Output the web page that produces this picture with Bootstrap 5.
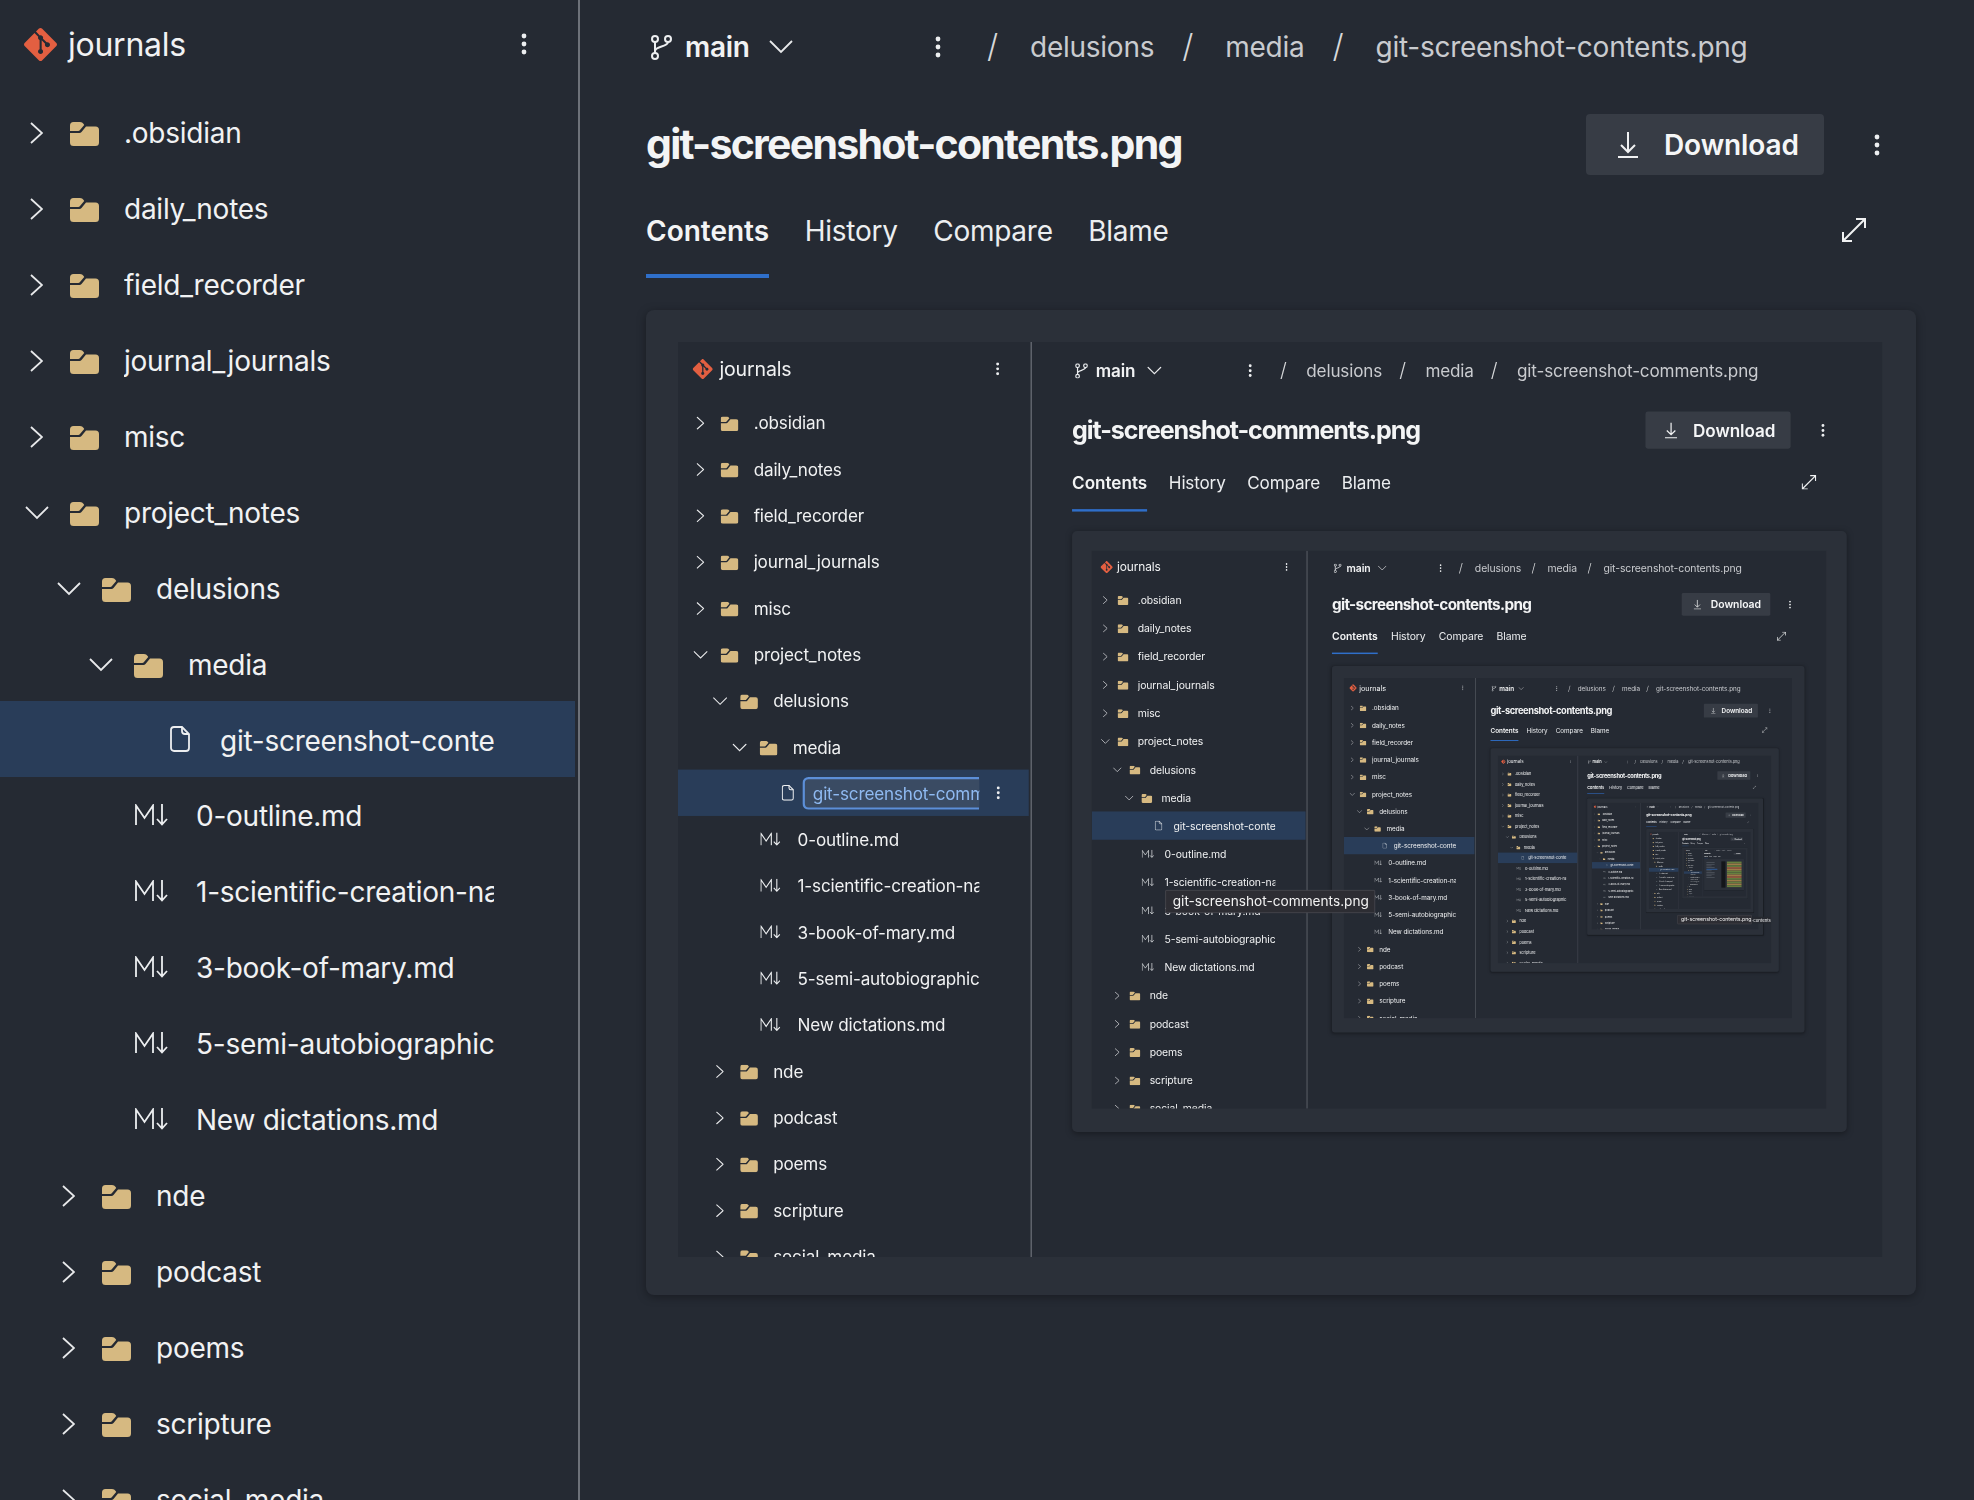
<!DOCTYPE html>
<html lang="en">
<head>
<meta charset="utf-8">
<title>journals</title>
<link href="https://cdn.jsdelivr.net/npm/bootstrap@5.3.0/dist/css/bootstrap.min.css" rel="stylesheet">
<style>
html,body{margin:0;height:100%;overflow:hidden;background:#252a33}
body{font-family:Inter,"Liberation Sans",sans-serif;color:#f1f2f3}
.frame{width:1974px;height:1500px;background:#252a33;overflow:hidden;position:relative;color:#f1f2f3;letter-spacing:-.25px}
.side{width:580px;height:1500px;border-right:2px solid #6d7179;flex:none;overflow:hidden}
.side-head{height:88px;margin-bottom:6px;padding:0 0 0 24px}
.repo{font-size:32px;line-height:44px;margin:2px 0 0 11px;font-weight:400}
.logo{width:33px;height:33px;fill:#e35f41;display:block}
.dots{width:6px;height:22px;display:block;fill:#eceef0;flex:none}
.side-dots{position:absolute;left:521px;top:33px}
.tree{background:transparent;border-radius:0;width:575px}
.tree .list-group-item{height:76px;border:0;border-radius:0;background:transparent;color:#f1f2f3;font-size:28px;line-height:40px;display:flex;align-items:center;padding:0 81px 0 0;white-space:nowrap;overflow:hidden;position:relative}
.tree .list-group-item.active{background:#293d59;color:#f1f2f3}
.tree .list-group-item.active .label{padding-top:3px}
.chev-slot{width:58px;padding-right:9px;flex:none;display:flex;justify-content:center;margin-top:1px}
.fold{width:29px;height:24px;fill:#d6b981;flex:none;margin:3px 25px 0 0;display:block}
.chev{display:block;fill:none;stroke:#e8e9eb;stroke-width:1.8}
.label{overflow:hidden;flex:1 1 auto;min-width:0;padding-top:1px}
.md-ic{width:33px;height:22px;flex:none;margin-right:28px;display:block;fill:none;stroke:#eceef0;stroke-width:1.8}
.file-ic{width:20px;height:26px;flex:none;margin-right:30px;display:block;fill:none;stroke:#eceef0;stroke-width:1.8}
.rename{position:relative;flex:1 1 auto;height:54px;margin:2px 0 0 -16px;padding-left:13px;border:4px solid #5c8fd8;border-right:0;border-radius:10px 0 0 10px;background:#3a4b63;color:#8fbaf2;line-height:46px;overflow:hidden}
.row-dots{position:absolute;left:522px;top:27px}
.main{flex:1 1 auto;min-width:0;padding:0 58px 0 66px}
.topbar{height:94px;font-size:28px}
.branch{width:21px;height:25px;fill:none;stroke:#eceef0;stroke-width:2;margin-left:5px;display:block}
.bname{font-weight:600;margin-left:13px;width:84px}
.top-dots{margin-left:142px}
.crumbs{margin:0 0 0 46px;padding:0;flex-wrap:nowrap;color:#c9cbcf;--bs-breadcrumb-divider:none}
.crumbs .breadcrumb-item,.crumbs .breadcrumb-item.active{color:#c9cbcf;padding:0}
.crumbs .breadcrumb-item+.breadcrumb-item{padding:0}
.crumbs .breadcrumb-item+.breadcrumb-item::before{content:none}
.slash{width:43px;display:inline-block;font-size:32px;font-weight:300;line-height:1;color:#d6d8da}
.gapr{margin-right:28px}
.titlerow{height:61px;margin-top:20px}
.ttl{font-size:41px;font-weight:700;letter-spacing:-1.75px;margin:0;color:#f3f4f5;line-height:61px}
.dl{width:238px;height:61px;background:#373c45;border:0;border-radius:4px;color:#f5f6f7;font-weight:600;font-size:28px;letter-spacing:-.1px;display:flex;align-items:center;padding:0 0 0 32px;margin-left:auto}
.dl:hover{background:#373c45;color:#f5f6f7}
.dl-ic{width:20px;height:26px;fill:none;stroke:#f0f1f2;stroke-width:2;display:block;margin-right:26px}
.more{margin:0 36px 0 50px}
.tabsrow{margin-top:38px;position:relative}
.tabs{gap:35.5px;border:0}
.tabs .nav-link{padding:0 0 25px;border:0;border-bottom:4px solid transparent;border-radius:0;background:transparent;font-size:28px;line-height:36px;color:#eceef0;white-space:nowrap}
.tabs .nav-link.active{border-bottom-color:#2f6fca;font-weight:600;color:#f3f4f5;background:transparent;letter-spacing:0;min-width:123px}
.expand{position:absolute;right:50px;top:5px;width:24px;height:24px;fill:none;stroke:#f0f1f2;stroke-width:2}
.shot-card{width:1270px;height:985px;margin-top:32px;padding:32px 32px 38px;background:#2b3039;border:0;border-radius:8px;box-shadow:0 2px 10px rgba(0,0,0,.35)}
.shot{width:1206px;height:915px;overflow:hidden;filter:blur(.5px)}
.shot>.frame{transform:scale(.61);transform-origin:0 0}
.tip{position:absolute;z-index:5;background:#2d2d33;border:2px solid #4b4b52;color:#f3f3f3;white-space:nowrap;overflow:hidden;border-radius:2px;display:flex;align-items:center;letter-spacing:0}
.tip-a{left:198px;top:912px;width:564px;height:62px;font-size:36.7px;padding-left:18px}
.tip-b{left:1469px;top:1045px;width:328px;height:40px;font-size:23px;padding-left:14px}
.tip-c{left:1610px;top:1165px;width:364px;height:48px;font-size:31px;padding-left:8px;background:#25282f;border:0}
.diff{display:flex;gap:40px;height:100%;padding:40px}
.diff-l{flex:1 1 auto}
.diff-l i{display:block;height:22px;margin:30px 0;background:#545a64;width:60%}
.diff-l i:nth-child(3n){width:38%}
.diff-l i:nth-child(5){background:#2f6fca;width:80%}
.diff-c{width:130px;background:#14161a}
.diff-r{width:480px;display:flex;flex-direction:column;gap:8px;background:#3c3f3a;padding:10px}
.diff-r i{display:block;height:50px}
.g{background:#66803f}.y{background:#9c7c48}.r{background:#a05c3f}
</style>
</head>
<body>
<div id="app"></div>
<script src="https://cdn.jsdelivr.net/npm/bootstrap@5.3.0/dist/js/bootstrap.bundle.min.js"></script>
<script>
var DOTS='<svg class="dots {c}" viewBox="0 0 6 22"><circle cx="3" cy="3" r="2.4"/><circle cx="3" cy="11" r="2.4"/><circle cx="3" cy="19" r="2.4"/></svg>';
function dots(c){return DOTS.replace('{c}',c||'');}
var LOGO='<svg class="logo" viewBox="0 0 24 24"><path d="M23.546 10.93L13.067.452c-.604-.603-1.582-.603-2.188 0L8.708 2.627l2.76 2.76c.645-.215 1.379-.07 1.889.441.516.515.658 1.258.438 1.9l2.658 2.66c.645-.223 1.387-.078 1.9.435.721.72.721 1.884 0 2.604-.719.719-1.881.719-2.6 0-.539-.541-.674-1.337-.404-1.996L12.86 8.955v6.525c.176.086.342.203.488.348.713.721.713 1.883 0 2.6-.719.721-1.889.721-2.609 0-.719-.719-.719-1.879 0-2.598.182-.18.387-.316.605-.406V8.835c-.217-.091-.424-.222-.6-.401-.545-.545-.676-1.342-.396-2.009L7.636 3.7.45 10.881c-.6.605-.6 1.584 0 2.189l10.48 10.477c.604.604 1.582.604 2.186 0l10.43-10.43c.605-.603.605-1.582 0-2.187"/></svg>';
var FOLD='<svg class="fold" viewBox="0 0 29 24"><path d="M0 9V3.5A3.5 3.5 0 0 1 3.500 0H10c1.600 0 2.800.7 3.600 2l.6 1-4.200 5c-.5.6-1 1-1.800 1z"/><path d="M0 11h9.500c.8 0 1.400-.3 2-1L16 4.500h9.500A3.500 3.500 0 0 1 29 8v12.500a3.500 3.500 0 0 1-3.500 3.500h-22A3.500 3.500 0 0 1 0 20.500z"/></svg>';
var CR='<svg class="chev" width="13" height="22" viewBox="0 0 13 22"><path d="M1 1l11 10L1 21"/></svg>';
var CD='<svg class="chev" width="24" height="14" viewBox="0 0 24 14"><path d="M1 1l11 11L23 1"/></svg>';
var MD='<svg class="md-ic" viewBox="0 0 33 22"><path d="M1 21V1.500L9.500 14 18 1.500V21"/><path d="M27 0v20M22 15l5 5.500 5-5.500"/></svg>';
var FILE='<svg class="file-ic" viewBox="0 0 20 26"><path d="M4 1h8l7 7v14a3 3 0 0 1-3 3H4a3 3 0 0 1-3-3V4a3 3 0 0 1 3-3z"/><path d="M12 1v4a3 3 0 0 0 3 3h4"/></svg>';
var TREE=[['.obsidian',0,0],['daily_notes',0,0],['field_recorder',0,0],['journal_journals',0,0],['misc',0,0],['project_notes',0,1],['delusions',1,1],['media',2,1],null,
['0-outline.md','m'],['1-scientific-creation-narrative.md','m'],['3-book-of-mary.md','m'],['5-semi-autobiographical.md','m'],['New dictations.md','m'],
['nde',1,0],['podcast',1,0],['poems',1,0],['scripture',1,0],['social_media',1,0]];
function tree(o){
  var h='<div class="list-group tree">';
  TREE.forEach(function(t){
    if(!t){
      h+='<div class="list-group-item active" style="padding-left:170px">'+FILE+
        (o.rename?'<div class="rename">git-screenshot-comments.png</div>'+dots('row-dots'):'<span class="label">git-screenshot-contents.png</span>')+'</div>';
    }else if(t[1]==='m'){
      h+='<div class="list-group-item" style="padding-left:135px">'+MD+'<span class="label">'+t[0]+'</span></div>';
    }else{
      h+='<div class="list-group-item" style="padding-left:'+(12+32*t[1])+'px"><span class="chev-slot">'+(t[2]?CD:CR)+'</span>'+FOLD+'<span class="label">'+t[0]+'</span></div>';
    }
  });
  return h+'</div>';
}
var LV=[
 {title:'git-screenshot-contents.png',crumb:'git-screenshot-contents.png'},
 {title:'git-screenshot-comments.png',crumb:'git-screenshot-comments.png',rename:1},
 {title:'git-screenshot-contents.png',crumb:'git-screenshot-contents.png',tip:['tip-a','git-screenshot-comments.png']},
 {title:'git-screenshot-contents.png',crumb:'git-screenshot-contents.png',tip:['tip-b','git-screenshot-contents.png']},
 {title:'git-screenshot-contents.png',crumb:'git-screenshot-contents.png',tip:['tip-c','git-screenshot-contents.png']},
 {title:'git-screenshot-contents.png',crumb:'git-screenshot-contents.png'},
 {title:'git-screenshot.png',crumb:'git-screenshot.png'},
 {title:'comments',crumb:'comments',last:1}
];
function diff(){
  var rows='',c=['g','y','g','r','y','g','g','y','r','g','y','g','y','g'];
  c.forEach(function(x){rows+='<i class="'+x+'"></i>';});
  return '<div class="diff"><div class="diff-l"><i></i><i></i><i></i><i></i><i></i><i></i><i></i><i></i><i></i><i></i></div><div class="diff-c"></div><div class="diff-r">'+rows+'</div></div>';
}
function frame(d){
  var o=LV[d];
  return '<div class="frame d-flex">'+
   '<aside class="side"><div class="side-head d-flex align-items-center">'+LOGO+'<span class="repo">journals</span>'+dots('side-dots')+'</div>'+tree(o)+'</aside>'+
   '<main class="main">'+
    '<div class="topbar d-flex align-items-center"><svg class="branch" viewBox="0 0 21 25"><circle cx="4" cy="4" r="3"/><circle cx="17" cy="4" r="3"/><circle cx="4" cy="21" r="3"/><path d="M4 7v11M17 7c0 5-13 4-13 9"/></svg><span class="bname">main</span><svg class="chev" width="24" height="14" viewBox="0 0 24 14"><path d="M1 1l11 11L23 1"/></svg>'+dots('top-dots')+
    '<ol class="breadcrumb crumbs align-items-center"><li class="breadcrumb-item"><span class="slash">/</span><span class="gapr">delusions</span></li><li class="breadcrumb-item"><span class="slash">/</span><span class="gapr">media</span></li><li class="breadcrumb-item active"><span class="slash">/</span><span>'+o.crumb+'</span></li></ol></div>'+
    '<div class="titlerow d-flex align-items-center"><h1 class="ttl">'+o.title+'</h1><button class="btn dl" type="button"><svg class="dl-ic" viewBox="0 0 20 26"><path d="M10 0v20M3 13l7 7 7-7M0 25h20"/></svg>Download</button>'+dots('more')+'</div>'+
    '<div class="tabsrow"><ul class="nav tabs"><li class="nav-item"><a class="nav-link active" href="#">Contents</a></li><li class="nav-item"><a class="nav-link" href="#">History</a></li><li class="nav-item"><a class="nav-link" href="#">Compare</a></li><li class="nav-item"><a class="nav-link" href="#">Blame</a></li></ul><svg class="expand" viewBox="0 0 24 24"><path d="M14 1h9v9M23 1L1 23M1 14v9h9"/></svg></div>'+
    '<div class="card shot-card"><div class="shot">'+(o.last?diff():frame(d+1))+'</div></div>'+
   '</main>'+
   (o.tip?'<div class="tip '+o.tip[0]+'">'+o.tip[1]+'</div>':'')+
  '</div>';
}
document.getElementById('app').innerHTML=frame(0);
</script>
</body>
</html>
